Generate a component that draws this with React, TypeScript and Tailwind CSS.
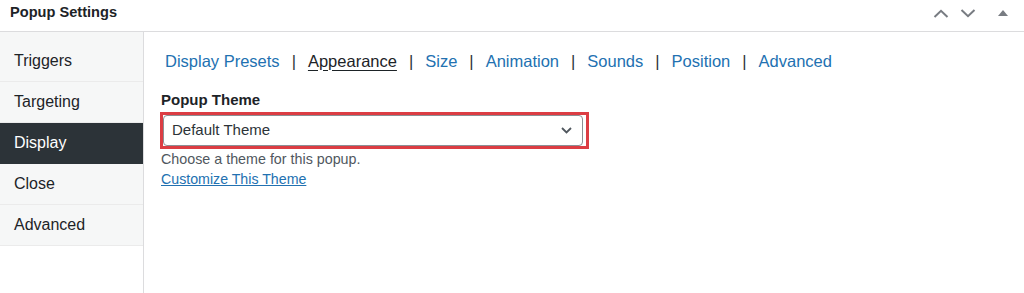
import React from 'react';

const sideItems = ['Triggers', 'Targeting', 'Display', 'Close', 'Advanced'];
const tabs = ['Display Presets', 'Appearance', 'Size', 'Animation', 'Sounds', 'Position', 'Advanced'];

export default function App() {
  const active = 'Display';
  const activeTab = 'Appearance';

  return (
    <div className="w-[1024px] h-[293px] bg-white overflow-hidden text-[#1d2327] font-['Liberation_Sans',Arial,sans-serif]">
      {/* header */}
      <div className="h-[32px] flex items-center justify-between border-b border-[#dcdcde] pl-[10px] pr-[8px]">
        <h2 className="text-[14.6px] font-bold leading-none -mt-[6px]">Popup Settings</h2>
        <div className="flex items-center -mt-[5px]">
          <button className="w-[26px] h-[20px] flex items-center justify-center text-[#787c82]">
            <svg width="16" height="9" viewBox="0 0 16 9" fill="none">
              <path d="M1.5 8 L8 1.8 L14.5 8" stroke="currentColor" strokeWidth="2" />
            </svg>
          </button>
          <button className="w-[26px] h-[20px] flex items-center justify-center text-[#787c82] ml-[1px]">
            <svg width="16" height="9" viewBox="0 0 16 9" fill="none">
              <path d="M1.5 1 L8 7.2 L14.5 1" stroke="currentColor" strokeWidth="2" />
            </svg>
          </button>
          <button className="w-[26px] h-[20px] flex items-center justify-center text-[#787c82] ml-[9px]">
            <svg width="10" height="6" viewBox="0 0 10 6">
              <path d="M0 6 L5 0 L10 6 Z" fill="currentColor" />
            </svg>
          </button>
        </div>
      </div>

      <div className="flex h-[261px]">
        {/* sidebar */}
        <div className="w-[144px] shrink-0 border-r border-[#dcdcde]">
          <ul className="bg-[#f6f7f7] pt-[9px]">
            {sideItems.map((item) => (
              <li
                key={item}
                className={`h-[41px] flex items-center pl-[14px] text-[16px] border-b ${
                  item === active
                    ? 'bg-[#2c3338] text-white border-[#2c3338]'
                    : 'text-[#1d2327] border-[#ebebeb]'
                }`}
              >
                {item}
              </li>
            ))}
          </ul>
        </div>

        {/* content */}
        <div className="flex-1 pl-[17px] pt-[18px]">
          <div className="flex items-center h-[22px] ml-[4px] text-[16.5px]">
            {tabs.map((t, i) => (
              <React.Fragment key={t}>
                {i > 0 && <span className="px-[12px] text-[#2c3338]">|</span>}
                <a
                  className={
                    t === activeTab
                      ? 'text-[#1d2327] underline underline-offset-[3px]'
                      : 'text-[#2271b1]'
                  }
                >
                  {t}
                </a>
              </React.Fragment>
            ))}
          </div>

          <label className="block mt-[18px] text-[15px] font-bold leading-[20px]">Popup Theme</label>

          <div className="inline-flex mt-[2px] -ml-[1px] border-[3px] border-[#dc3d43] pr-[3px]">
            <div className="w-[420px] h-[31px] border border-[#8c8f94] rounded-[4px] bg-white flex items-center justify-between pl-[8px] pr-[10px]">
              <span className="text-[15px] text-[#2c3338]">Default Theme</span>
              <svg width="11" height="7" viewBox="0 0 11 7" fill="none">
                <path d="M1 1 L5.5 5.5 L10 1" stroke="#50575e" strokeWidth="1.8" />
              </svg>
            </div>
          </div>

          <p className="text-[14.3px] leading-[20px] text-[#50575e]">Choose a theme for this popup.</p>
          <a className="block text-[14.2px] leading-[21px] text-[#2271b1] underline">Customize This Theme</a>
        </div>
      </div>
    </div>
  );
}
